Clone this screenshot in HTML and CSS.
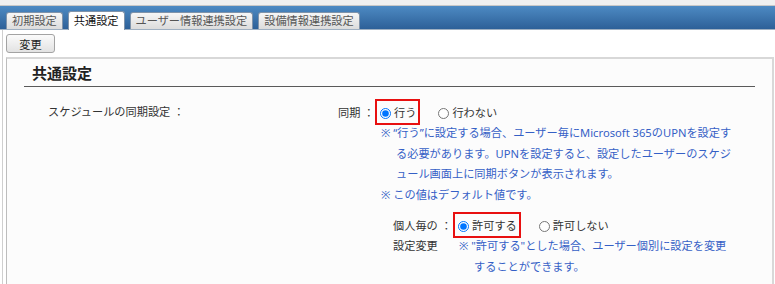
FILE: index.html
```html
<!DOCTYPE html>
<html lang="ja">
<head>
  <meta charset="UTF-8">
  <title>共通設定</title>
  <link rel="stylesheet" href="styles.css">
</head>
<body>

  <!-- Tab Bar -->
  <div class="header">
    <ul class="tabbar">
      <li class="tab">初期設定</li>
      <li class="tab active">共通設定</li>
      <li class="tab">ユーザー情報連携設定</li>
      <li class="tab">設備情報連携設定</li>
    </ul>
  </div>

  <div class="frame">
    <div class="toolbar">
      <button class="btn" type="button">変更</button>
    </div>

    <!-- Common Settings Panel -->
    <div class="panel">
      <h2 class="panel-title">共通設定</h2>

      <div class="setting">
        <div class="setting-label">スケジュールの同期設定 ：</div>
        <div class="setting-body">

          <div class="opt">
            <div class="opt-label">同期 ：</div>
            <div class="opt-values">
              <div class="choices">
                <label class="choice selected"><input type="radio" name="sync" checked>行う</label>
                <label class="choice"><input type="radio" name="sync">行わない</label>
              </div>
              <div class="notes">
                <p class="note">※ “行う”に設定する場合、ユーザー毎にMicrosoft 365のUPNを設定す<br>る必要があります。UPNを設定すると、設定したユーザーのスケジ<br>ュール画面上に同期ボタンが表示されます。</p>
                <p class="note">※ この値はデフォルト値です。</p>
              </div>
            </div>
          </div>

          <div class="opt personal">
            <div class="opt-label">個人毎の ：<br>設定変更</div>
            <div class="opt-values">
              <div class="choices">
                <label class="choice selected"><input type="radio" name="personal" checked>許可する</label>
                <label class="choice"><input type="radio" name="personal">許可しない</label>
              </div>
              <div class="notes">
                <p class="note">※ "許可する"とした場合、ユーザー個別に設定を変更<br>することができます。</p>
              </div>
            </div>
          </div>

        </div>
      </div>
    </div>
  </div>

</body>
</html>
```
FILE: styles.css
```css
* {
  margin: 0;
  padding: 0;
  box-sizing: border-box;
}

body {
  font-family: "Noto Sans", "Noto Sans CJK JP", sans-serif;
  font-size: 0.7rem;
  color: #333;
  background-color: #fff;
}

/* Tab Bar */
.header {
  background-color: #f0f0f0;
  padding-top: 5px;
}

.tabbar {
  list-style: none;
  display: flex;
  align-items: flex-end;
  gap: 5px;
  height: 25px;
  padding-left: 6px;
  border-top: 1px solid #c8c8c8;
  border-bottom: 1px solid #9fb0c2;
  background: linear-gradient(#4d8ac3, #2d6098);
}

.tab {
  height: 17px;
  line-height: 16px;
  padding: 0 5px;
  border: 1px solid #7f93aa;
  border-bottom: none;
  border-radius: 3px 3px 0 0;
  background: linear-gradient(#f6f6f6, #dcdcdc);
  color: #555;
  white-space: nowrap;
}

.tab.active {
  height: 19px;
  line-height: 18px;
  margin-bottom: -1px;
  background: #fff;
  color: #111;
}

/* Main Frame */
.frame {
  margin-left: 2px;
  border-left: 1px solid #cfcfcf;
  padding: 4px 1px 0 3px;
}

.btn {
  width: 49px;
  height: 19px;
  font: inherit;
  color: #222;
  border: 1px solid #a3a3a3;
  border-radius: 3px;
  background: linear-gradient(#fbfbfb, #e2e2e2);
}

.panel {
  margin-top: 4px;
  border: 2px solid #d8d8d8;
  border-left: 1px solid #bdbdbd;
  background-color: #fcfcfc;
  padding: 4px 17px 30px 17px;
}

.panel-title {
  font-size: 15px;
  line-height: 20px;
  font-weight: bold;
  color: #222;
  padding: 0 0 3px 8px;
  border-bottom: 1px solid #5a5a5a;
}

/* Setting Rows */
.setting {
  display: flex;
  margin-top: 12px;
  padding-left: 24px;
}

.setting-label {
  width: 290px;
  padding-top: 3px;
  line-height: 20px;
  white-space: nowrap;
}

.setting-body {
  flex: 1;
}

.opt {
  display: flex;
}

.opt-label {
  width: 37px;
  padding-top: 4px;
  line-height: 20px;
  white-space: nowrap;
}

.personal {
  margin-top: 7px;
  margin-left: 55px;
}

.personal .opt-label {
  width: 60px;
}

.choices {
  display: flex;
  gap: 13px;
}

.choice {
  display: flex;
  align-items: center;
  gap: 3px;
  padding: 2px 2px 0 3px;
  border: 2px solid transparent;
  line-height: 20px;
  white-space: nowrap;
}

.choice.selected {
  border-color: #e81010;
}

.choice input {
  width: 11px;
  height: 11px;
  margin: 0;
}

.notes {
  margin-top: -2px;
}

.note {
  color: #3560c6;
  line-height: 20.5px;
  margin-left: 6px;
  padding-left: 15px;
  text-indent: -15px;
  white-space: nowrap;
}
```
